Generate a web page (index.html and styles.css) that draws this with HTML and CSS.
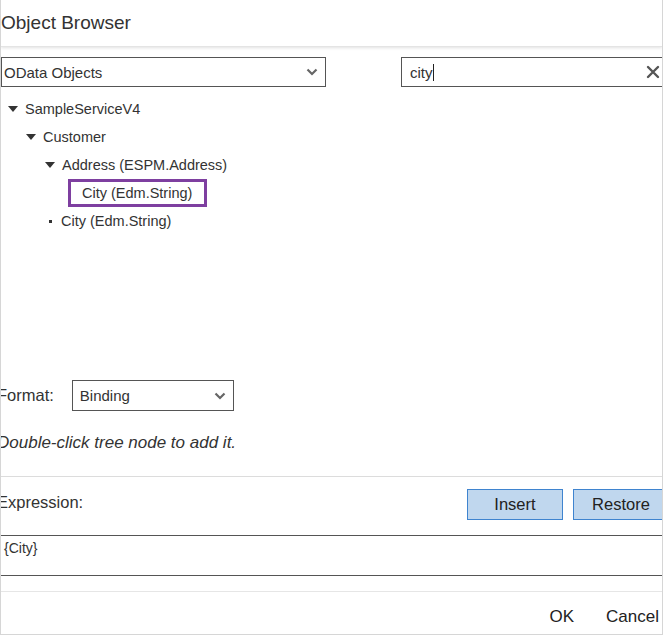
FILE: index.html
```html
<!DOCTYPE html>
<html>
<head>
<meta charset="utf-8">
<link rel="stylesheet" href="styles.css">
</head>
<body>
<div class="dialog">
  <div class="header"><span class="title">Object Browser</span></div>
  <div class="top-row">
    <div class="select source-select">
      <span>OData Objects</span>
      <svg class="chev" width="12" height="8" viewBox="0 0 12 8"><path d="M1.5 1.5 L6 6 L10.5 1.5" fill="none" stroke="#666" stroke-width="2.2"/></svg>
    </div>
    <div class="search">
      <span class="search-text">city</span><span class="caret"></span>
      <svg class="clear" width="14" height="14" viewBox="0 0 14 14"><path d="M2 2 L12 12 M12 2 L2 12" stroke="#555" stroke-width="2.4" stroke-linecap="round"/></svg>
    </div>
  </div>
  <div class="tree">
    <div class="node lvl1"><span class="tri"></span><span>SampleServiceV4</span></div>
    <div class="node lvl2"><span class="tri"></span><span>Customer</span></div>
    <div class="node lvl3"><span class="tri"></span><span>Address (ESPM.Address)</span></div>
    <div class="node lvl4 selected"><span class="dot"></span><span>City (Edm.String)</span></div>
    <div class="node lvl3"><span class="dot"></span><span>City (Edm.String)</span></div>
  </div>
  <div class="format-row">
    <span class="label">Format:</span>
    <div class="select format-select">
      <span>Binding</span>
      <svg class="chev" width="12" height="8" viewBox="0 0 12 8"><path d="M1.5 1.5 L6 6 L10.5 1.5" fill="none" stroke="#666" stroke-width="2.2"/></svg>
    </div>
  </div>
  <div class="hint">Double-click tree node to add it.</div>
  <div class="expr-row">
    <span class="label expr-label">Expression:</span>
    <div class="buttons">
      <button class="btn">Insert</button>
      <button class="btn">Restore</button>
    </div>
  </div>
  <div class="expr-box">{City}</div>
  <div class="footer">
    <span class="link">OK</span>
    <span class="link">Cancel</span>
  </div>
</div>
</body>
</html>
```
FILE: styles.css
```css
* { box-sizing: border-box; }
html, body { margin: 0; padding: 0; background: #fff; }
body {
  font-family: "Liberation Sans", Arial, sans-serif;
  color: #333;
  font-size: 15px;
}
.dialog {
  width: 663px;
  height: 635px;
  border-left: 1px solid #d6d6d6;
  border-right: 1px solid #d6d6d6;
  border-bottom: 1px solid #d6d6d6;
  display: flex;
  flex-direction: column;
  overflow: hidden;
}
.header {
  height: 47px;
  border-bottom: 1px solid #e4e4e4;
  box-shadow: 0 1px 3px rgba(0,0,0,0.12);
  display: flex;
  align-items: center;
}
.title {
  font-size: 19px;
  color: #333;
}
.top-row {
  display: flex;
  justify-content: space-between;
  margin-top: 10px;
  height: 30px;
}
.select {
  border: 1px solid #555;
  display: flex;
  align-items: center;
  justify-content: space-between;
  font-size: 15px;
  color: #333;
}
.source-select {
  width: 325px;
  height: 30px;
  padding: 0 7px 0 2px;
}
.search {
  width: 261px;
  height: 30px;
  border: 1px solid #555;
  border-right: none;
  display: flex;
  align-items: center;
  padding-left: 8px;
}
.search-text { font-size: 15px; }
.caret {
  width: 1px;
  height: 17px;
  background: #222;
}
.clear { margin-left: auto; margin-right: 2px; }
.tree {
  height: 293px;
  padding-top: 8px;
}
.node {
  height: 28px;
  display: flex;
  align-items: center;
  font-size: 14.5px;
  color: #333;
}
.tri {
  width: 0;
  height: 0;
  border-left: 5px solid transparent;
  border-right: 5px solid transparent;
  border-top: 6px solid #333;
  margin-right: 7px;
}
.dot {
  width: 3px;
  height: 3px;
  background: #333;
  margin: 0 9px 0 4px;
}
.lvl1 { padding-left: 7px; }
.lvl2 { padding-left: 25px; }
.lvl3 { padding-left: 44px; }
.selected {
  margin-left: 67px;
  width: 139px;
  padding-left: 0;
  border: 3px solid #7e3fa0;
}
.selected .dot { margin: 0 8px 0 0; visibility: hidden; }
.format-row {
  display: flex;
  align-items: center;
  height: 31px;
}
.label {
  margin-left: -4px;
  font-size: 16.5px;
  color: #333;
}
.format-select {
  margin-left: 18px;
  width: 162px;
  height: 31px;
  padding: 0 7px;
}
.hint {
  margin-top: 22px;
  margin-left: -4px;
  font-style: italic;
  font-size: 17px;
  color: #333;
  height: 24px;
}
.expr-row {
  margin-top: 19px;
  border-top: 1px solid #dcdcdc;
  height: 59px;
  display: flex;
  align-items: center;
  justify-content: space-between;
  padding: 10px 0 14px;
}
.expr-label { margin-bottom: 4px; }
.buttons {
  display: flex;
  gap: 10px;
  margin-right: -7px;
}
.btn {
  width: 96px;
  height: 31px;
  background: #c0d7ee;
  border: 1px solid #3f84cf;
  font-family: "Liberation Sans", Arial, sans-serif;
  font-size: 16.5px;
  color: #222;
  padding: 0;
  border-radius: 0;
}
.expr-box {
  border-top: 1px solid #555;
  border-bottom: 1px solid #555;
  height: 41px;
  padding: 4px 0 0 3px;
  font-size: 14px;
  color: #333;
}
.footer {
  margin-top: 15px;
  border-top: 1px solid #e6e6e6;
  flex: 1;
  display: flex;
  justify-content: flex-end;
  align-items: center;
  gap: 32px;
  padding: 8px 3px 0 0;
  font-size: 17px;
}
.link { color: #222; }
```
